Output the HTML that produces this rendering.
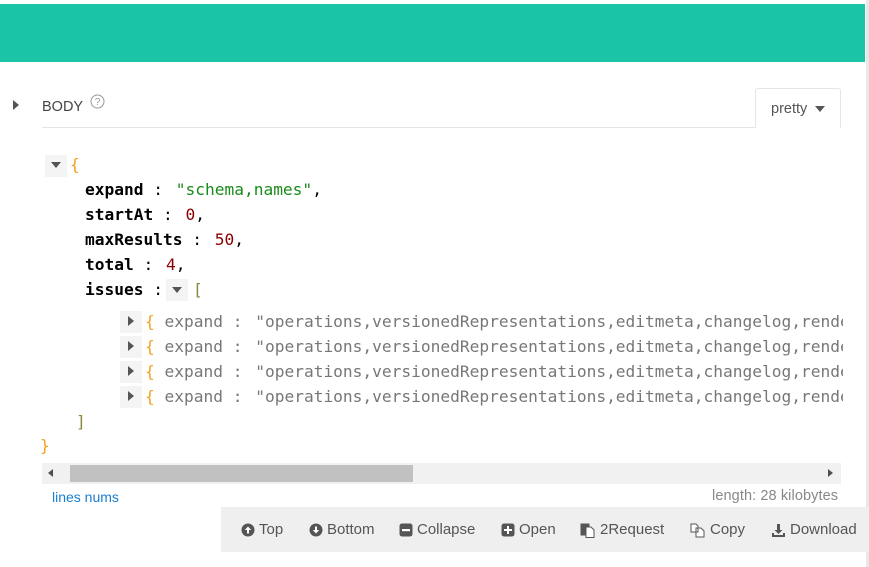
<!DOCTYPE html>
<html><head><meta charset="utf-8"><style>
*{margin:0;padding:0;box-sizing:border-box}
body{width:869px;height:567px;background:#fff;position:relative;overflow:hidden;font-family:"Liberation Sans",Arial,sans-serif}
.hdr{position:absolute;left:0;top:4px;width:865px;height:58px;background:#1ac4a7}
.rb{position:absolute;left:866px;top:0;width:3px;height:567px;background:#e8e8e8}
.abs{position:absolute}
.mono{font-family:"DejaVu Sans Mono",monospace;font-size:16.2px;line-height:25px;white-space:pre}
.k{font-weight:bold;color:#000}
.s{color:#1a8a1a}.n{color:#880000}.br{color:#f5a020}.bk{color:#8a8a3a}
.g{color:#777}
.v{margin-left:3px}
.tog{position:absolute;width:22px;height:22px;background:#f4f4f4}
.tri-d{position:absolute;width:0;height:0;border-left:5px solid transparent;border-right:5px solid transparent;border-top:6px solid #555}
.tri-r{position:absolute;width:0;height:0;border-top:5px solid transparent;border-bottom:5px solid transparent;border-left:6px solid #555}
.tb{position:absolute;top:522px;font-size:15px;color:#555;line-height:16px;display:flex;align-items:center}
.tb svg{margin-right:4px}
</style></head><body>
<div class="hdr"></div>
<div class="rb"></div>
<div class="tri-r" style="left:13px;top:100px"></div>
<div class="abs" style="left:42px;top:99px;font-size:14.5px;color:#444">BODY</div>
<svg class="abs" style="left:90px;top:94px" width="15" height="15" viewBox="0 0 15 15"><circle cx="7.5" cy="7.5" r="6.5" fill="none" stroke="#999" stroke-width="1"/><text x="7.5" y="11" font-size="10" text-anchor="middle" fill="#999" font-family="Liberation Sans">?</text></svg>
<div class="abs" style="left:42px;top:127px;width:799px;height:1px;background:#e5e5e5"></div>
<div class="abs" style="left:755px;top:88px;width:86px;height:40px;border:1px solid #e5e5e5;border-bottom:none;border-radius:3px 3px 0 0;background:#fff"></div>
<div class="abs" style="left:771px;top:101px;font-size:14.5px;color:#555">pretty</div>
<div class="tri-d" style="left:815px;top:106px"></div>

<div class="tog" style="left:45px;top:155px"></div><div class="tri-d" style="left:51px;top:162px"></div>
<div class="abs mono br" style="left:70px;top:152px">{</div>
<div class="abs mono" style="left:85px;top:177px"><span class="k">expand</span> : <span class="s v">"schema,names"</span>,</div>
<div class="abs mono" style="left:85px;top:202px"><span class="k">startAt</span> : <span class="n v">0</span>,</div>
<div class="abs mono" style="left:85px;top:227px"><span class="k">maxResults</span> : <span class="n v">50</span>,</div>
<div class="abs mono" style="left:85px;top:252px"><span class="k">total</span> : <span class="n v">4</span>,</div>
<div class="abs mono" style="left:85px;top:277px"><span class="k">issues</span> :</div>
<div class="tog" style="left:166px;top:279px"></div><div class="tri-d" style="left:172px;top:287px"></div>
<div class="abs mono bk" style="left:193px;top:277px">[</div>

<div class="tog" style="left:120px;top:311px"></div><div class="tri-r" style="left:128px;top:316px"></div>
<div class="abs mono" style="left:145px;top:309px"><span class="br">{</span> <span class="g">expand : <span class="v">"operations,versionedRepresentations,editmeta,changelog,rende</span></span></div>
<div class="tog" style="left:120px;top:336px"></div><div class="tri-r" style="left:128px;top:341px"></div>
<div class="abs mono" style="left:145px;top:334px"><span class="br">{</span> <span class="g">expand : <span class="v">"operations,versionedRepresentations,editmeta,changelog,rende</span></span></div>
<div class="tog" style="left:120px;top:361px"></div><div class="tri-r" style="left:128px;top:366px"></div>
<div class="abs mono" style="left:145px;top:359px"><span class="br">{</span> <span class="g">expand : <span class="v">"operations,versionedRepresentations,editmeta,changelog,rende</span></span></div>
<div class="tog" style="left:120px;top:386px"></div><div class="tri-r" style="left:128px;top:391px"></div>
<div class="abs mono" style="left:145px;top:384px"><span class="br">{</span> <span class="g">expand : <span class="v">"operations,versionedRepresentations,editmeta,changelog,rende</span></span></div>
<div class="abs" style="left:843px;top:300px;width:23px;height:110px;background:#fff"></div>
<div class="abs mono bk" style="left:76px;top:409px">]</div>
<div class="abs mono br" style="left:40px;top:433px">}</div>

<div class="abs" style="left:42px;top:463px;width:799px;height:21px;background:#f1f1f1"></div>
<div class="abs" style="left:70px;top:465px;width:343px;height:17px;background:#c1c1c1"></div>
<div class="abs" style="left:48px;top:469px;width:0;height:0;border-top:4px solid transparent;border-bottom:4px solid transparent;border-right:5px solid #505050"></div>
<div class="abs" style="left:828px;top:469px;width:0;height:0;border-top:4px solid transparent;border-bottom:4px solid transparent;border-left:5px solid #505050"></div>
<div class="abs" style="left:52px;top:489px;font-size:14px;color:#1a7fd0">lines nums</div>
<div class="abs" style="left:712px;top:488px;font-size:14.5px;color:#888;letter-spacing:0.1px">length: 28 kilobytes</div>

<div class="abs" style="left:221px;top:507px;width:648px;height:45px;background:#efefef"></div>
<div class="tb" style="left:241px"><svg width="14" height="14" viewBox="0 0 14 14"><circle cx="7" cy="7" r="6.5" fill="#555"/><path d="M7 3.5L3.8 7H6v3.5h2V7h2.2z" fill="#fff"/></svg>Top</div>
<div class="tb" style="left:309px"><svg width="14" height="14" viewBox="0 0 14 14"><circle cx="7" cy="7" r="6.5" fill="#555"/><path d="M7 10.5L3.8 7H6V3.5h2V7h2.2z" fill="#fff"/></svg>Bottom</div>
<div class="tb" style="left:399px"><svg width="14" height="14" viewBox="0 0 14 14"><rect x="0.5" y="0.5" width="13" height="13" rx="2.5" fill="#555"/><rect x="3" y="6" width="8" height="2.2" fill="#fff"/></svg>Collapse</div>
<div class="tb" style="left:501px"><svg width="14" height="14" viewBox="0 0 14 14"><rect x="0.5" y="0.5" width="13" height="13" rx="2.5" fill="#555"/><path d="M6 3h2v3h3v2H8v3H6V8H3V6h3z" fill="#fff"/></svg>Open</div>
<div class="tb" style="left:580px"><svg width="16" height="15" viewBox="0 0 16 15"><rect x="0.5" y="0.5" width="9" height="12" fill="#555"/><path d="M6 4h5l3 3v7.5H6z" fill="#fff" stroke="#555"/></svg>2Request</div>
<div class="tb" style="left:690px"><svg width="16" height="15" viewBox="0 0 16 15"><path d="M1 1h5l2 2v6H1z M6 5h5l3 3v6H6z" fill="#fff" stroke="#555"/></svg>Copy</div>
<div class="tb" style="left:771px"><svg width="15" height="15" viewBox="0 0 15 15"><path d="M6 1h3v6h2.5L7.5 11 3.5 7H6z" fill="#555"/><path d="M1 10v4h13v-4h-2v2H3v-2z" fill="#555"/></svg>Download</div>
</body></html>
